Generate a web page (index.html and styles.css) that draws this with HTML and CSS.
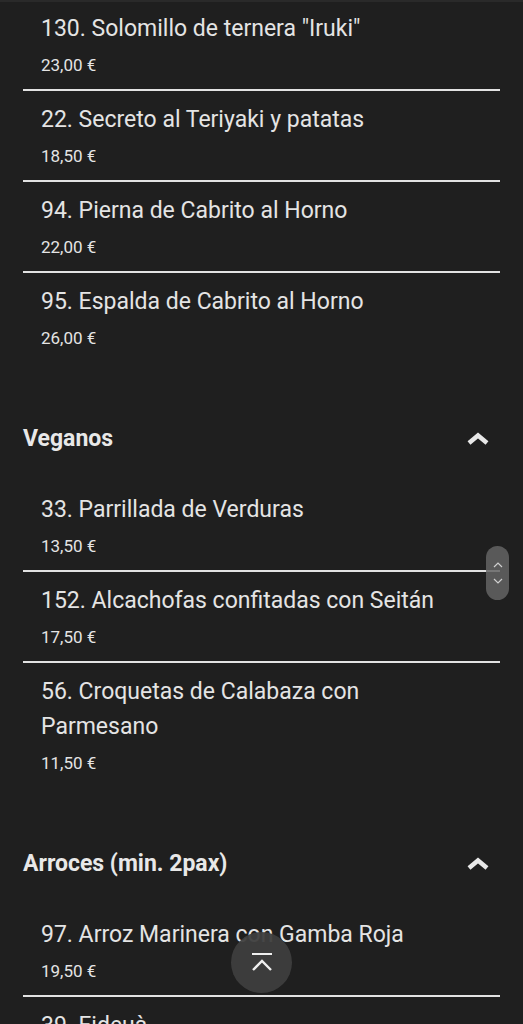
FILE: index.html
```html
<!DOCTYPE html>
<html lang="es">
<head>
  <meta charset="UTF-8" />
  <meta name="viewport" content="width=device-width, initial-scale=1" />
  <title>Carta</title>
  <link rel="stylesheet" href="styles.css">
</head>
<body>

<div id="menu">
  <div class="item">
    <div class="item-name">130. Solomillo de ternera "Iruki"</div>
    <div class="item-price">23,00 €</div>
  </div>
  <div class="item">
    <div class="item-name">22. Secreto al Teriyaki y patatas</div>
    <div class="item-price">18,50 €</div>
  </div>
  <div class="item">
    <div class="item-name">94. Pierna de Cabrito al Horno</div>
    <div class="item-price">22,00 €</div>
  </div>
  <div class="item last">
    <div class="item-name">95. Espalda de Cabrito al Horno</div>
    <div class="item-price">26,00 €</div>
  </div>

  <div class="section-head">
    <span>Veganos</span>
    <svg class="chevron" width="24" height="16" viewBox="0 0 24 16">
      <polyline points="3,13 12,5.5 21,13" fill="none" stroke="#e8e8e8" stroke-width="4.5" />
    </svg>
  </div>
  <div class="item">
    <div class="item-name">33. Parrillada de Verduras</div>
    <div class="item-price">13,50 €</div>
  </div>
  <div class="item">
    <div class="item-name">152. Alcachofas confitadas con Seitán</div>
    <div class="item-price">17,50 €</div>
  </div>
  <div class="item last">
    <div class="item-name">56. Croquetas de Calabaza con Parmesano</div>
    <div class="item-price">11,50 €</div>
  </div>

  <div class="section-head">
    <span>Arroces (min. 2pax)</span>
    <svg class="chevron" width="24" height="16" viewBox="0 0 24 16">
      <polyline points="3,13 12,5.5 21,13" fill="none" stroke="#e8e8e8" stroke-width="4.5" />
    </svg>
  </div>
  <div class="item">
    <div class="item-name">97. Arroz Marinera con Gamba Roja</div>
    <div class="item-price">19,50 €</div>
  </div>
  <div class="item">
    <div class="item-name">39. Fideuà</div>
    <div class="item-price">18,00 €</div>
  </div>
</div>

<!-- fast scroll handle -->
<div class="scroll-handle">
  <svg width="10" height="8" viewBox="0 0 10 8"><polyline points="1,6 5,2 9,6" fill="none" stroke="#cfcfcf" stroke-width="1.2" /></svg>
  <svg width="10" height="8" viewBox="0 0 10 8"><polyline points="1,2 5,6 9,2" fill="none" stroke="#cfcfcf" stroke-width="1.2" /></svg>
</div>

<button class="to-top" type="button">
  <svg width="24" height="24" viewBox="0 0 24 24">
    <line x1="2" y1="3" x2="22" y2="3" stroke="#f0f0f0" stroke-width="2" />
    <polyline points="3,19 12,10 21,19" fill="none" stroke="#f0f0f0" stroke-width="2.4" />
  </svg>
</button>

</body>
</html>
```

FILE: styles.css
```css
body {
  margin: 0;
  background-color: #1f1f1f;
  color: #e4e4e4;
  font-family: Roboto, "Noto Sans", sans-serif;
  height: 1024px;
  overflow: hidden;
  border-top: 2px solid #2a2a2a;
  box-sizing: border-box;
}
#menu {
  padding: 0 23px;
  margin-top: -2px;
}
.item {
  padding: 11px 0 14px 18px;
  border-bottom: 2px solid #e2e2e2;
}
.item.last {
  border-bottom: none;
}
.item-name {
  font-size: 23px;
  line-height: 35px;
  padding-right: 40px;
}
.item-price {
  font-size: 17px;
  line-height: 20px;
  margin-top: 9px;
}
.section-head {
  display: flex;
  justify-content: space-between;
  align-items: center;
  height: 56px;
  margin-top: 48px;
  margin-bottom: 15px;
  padding-right: 10px;
  font-size: 23px;
  font-weight: bold;
  color: #e8e8e8;
}
.chevron {
  display: block;
}
.scroll-handle {
  position: absolute;
  left: 486px;
  top: 546px;
  width: 23px;
  height: 54px;
  border-radius: 12px;
  background: rgba(100, 100, 100, 0.85);
  display: flex;
  flex-direction: column;
  align-items: center;
  justify-content: center;
  gap: 8px;
}
.scroll-handle svg {
  display: block;
}
.to-top {
  position: absolute;
  left: 231px;
  top: 932px;
  width: 61px;
  height: 61px;
  border-radius: 50%;
  border: none;
  padding: 0;
  background: rgba(62, 62, 62, 0.95);
  display: flex;
  align-items: center;
  justify-content: center;
}
.to-top svg {
  display: block;
}
```
